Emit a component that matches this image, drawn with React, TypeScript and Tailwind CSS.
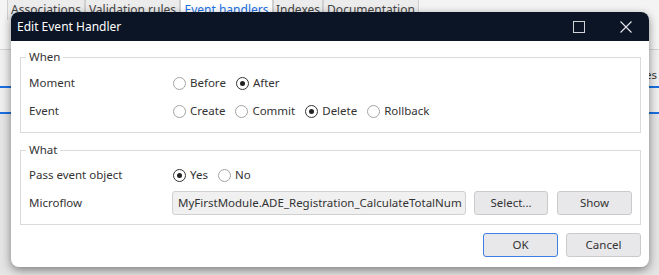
import React from 'react';

const tabs = [
  { label: 'Associations', w: 'w-[78px]' },
  { label: 'Validation rules', w: 'w-[95px]' },
  { label: 'Event handlers', w: 'w-[93px]', active: true },
  { label: 'Indexes', w: 'w-[50px]' },
  { label: 'Documentation', w: 'w-[96px]' },
];

const Radio: React.FC<{ label: string; checked?: boolean }> = ({ label, checked }) => (
  <span className="flex items-center mr-[10px]">
    <span
      className={`w-[13px] h-[13px] rounded-full border flex items-center justify-center bg-white ${
        checked ? 'border-[#333333]' : 'border-[#a3a3a3]'
      }`}
    >
      {checked && <span className="w-[5px] h-[5px] rounded-full bg-[#222222]" />}
    </span>
    <span className="ml-[4px] text-[#333333]">{label}</span>
  </span>
);

const Row: React.FC<{ label: string; className?: string; children: React.ReactNode }> = ({
  label,
  className,
  children,
}) => (
  <div className={`flex items-center h-[24px] pl-[8px] ${className ?? ''}`}>
    <span className="w-[144px] shrink-0 text-[#333333]">{label}</span>
    <div className="flex items-center">{children}</div>
  </div>
);

const Btn: React.FC<{ label: string; primary?: boolean; w: string }> = ({ label, primary, w }) => (
  <button
    className={`${w} h-[24px] rounded-[3px] border bg-[#e8e8ea] text-[#333333] flex items-center justify-center ${
      primary ? 'border-[#3d7fe3]' : 'border-[#cacaca]'
    }`}
  >
    {label}
  </button>
);

export default function App() {
  return (
    <div className="relative w-[659px] h-[275px] overflow-hidden bg-[#e6e6e6] text-[11.5px] leading-[16px] font-['Noto_Sans','Liberation_Sans',sans-serif]">
      {/* app behind the dialog */}
      <div className="flex flex-col">
        <div className="flex h-[22px] bg-[#f4f4f4] pl-[7px] -mt-[2px]">
          {tabs.map((t) => (
            <div
              key={t.label}
              className={`${t.w} shrink-0 border border-[#cfcfcf] border-b-0 pt-[3px] text-center text-[12px] ${
                t.active ? 'bg-white text-[#1a6fe0]' : 'bg-[#ececec] text-[#444444]'
              }`}
            >
              {t.label}
            </div>
          ))}
        </div>
        <div className="h-[30px] bg-[#f5f5f5] border-b border-[#d4d4d4]" />
        <div className="h-[36px] bg-[#f0f0f0] flex justify-end text-[#333333] pt-[17px] pr-[2px]">
          <span>Accesses</span>
        </div>
        <div className="h-[2px] bg-[#1a6fe0]" />
        <div className="h-[24px] bg-[#eeeeee]" />
        <div className="h-[2px] bg-[#1a6fe0]" />
        <div className="h-[160px] bg-[#e4e4e4]" />
      </div>

      {/* dialog */}
      <div className="absolute left-[11px] top-[12px] w-[638px] h-[255px] flex flex-col bg-white rounded-[8px] shadow-[0_3px_10px_rgba(0,0,0,0.45)]">
        <div className="h-[29px] shrink-0 bg-[#0b1526] rounded-t-[8px] flex items-center pl-[6px] text-white text-[12px]">
          <span className="flex-1">Edit Event Handler</span>
          <svg width="12" height="12" viewBox="0 0 12 12" className="mr-[35px]">
            <rect x="0.5" y="0.5" width="11" height="11" fill="none" stroke="#d0d3d8" strokeWidth="1" />
          </svg>
          <svg width="12" height="12" viewBox="0 0 12 12" className="mr-[17px]">
            <path d="M0.5 0.5 L11.5 11.5 M11.5 0.5 L0.5 11.5" stroke="#e6e8ec" strokeWidth="1.1" />
          </svg>
        </div>

        <div className="flex flex-col flex-1 pl-[9px] pr-[8px]">
          <fieldset className="mt-[8px] border border-[#dadada] pb-[9px]">
            <legend className="ml-[5px] px-[3px] text-[#333333]">When</legend>
            <Row label="Moment" className="mt-[6px]">
              <Radio label="Before" />
              <Radio label="After" checked />
            </Row>
            <Row label="Event" className="mt-[4px]">
              <Radio label="Create" />
              <Radio label="Commit" />
              <Radio label="Delete" checked />
              <Radio label="Rollback" />
            </Row>
          </fieldset>

          <fieldset className="mt-[9px] border border-[#dadada] pb-[9px]">
            <legend className="ml-[5px] px-[3px] text-[#333333]">What</legend>
            <Row label="Pass event object" className="mt-[5px]">
              <Radio label="Yes" checked />
              <Radio label="No" />
            </Row>
            <Row label="Microflow" className="mt-[4px]">
              <div className="-ml-[1px] w-[294px] h-[24px] rounded-[3px] border border-[#d0d0d0] bg-[#f0f0f0] pl-[5px] flex items-center text-[#333333] overflow-hidden whitespace-nowrap">
                MyFirstModule.ADE_Registration_CalculateTotalNum
              </div>
              <div className="ml-[8px]">
                <Btn label="Select..." w="w-[74px]" />
              </div>
              <div className="ml-[9px]">
                <Btn label="Show" w="w-[75px]" />
              </div>
            </Row>
          </fieldset>

          <div className="flex justify-end gap-[8px] mt-[8px]">
            <Btn label="OK" primary w="w-[75px]" />
            <Btn label="Cancel" w="w-[75px]" />
          </div>
        </div>
      </div>
    </div>
  );
}
